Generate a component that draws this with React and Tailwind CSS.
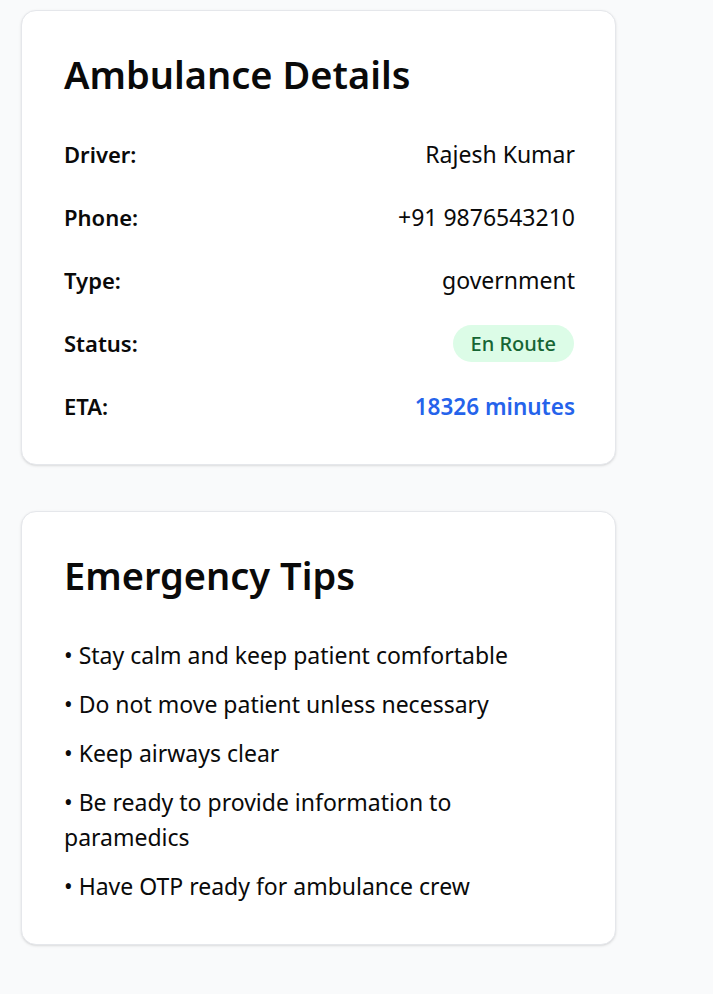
import React from 'react'

const details = [
  { label: 'Driver:', value: 'Rajesh Kumar' },
  { label: 'Phone:', value: '+91 9876543210' },
  { label: 'Type:', value: 'government' },
]

const tips = [
  'Stay calm and keep patient comfortable',
  'Do not move patient unless necessary',
  'Keep airways clear',
  'Be ready to provide information to paramedics',
  'Have OTP ready for ambulance crew',
]

const Card = ({ children }) => (
  <div className="w-[595px] bg-white border border-[#e5e7eb] rounded-[15px] shadow-sm pt-[40px] pb-[40px] pl-[42px] pr-[40px]">
    {children}
  </div>
)

const App = () => {
  return (
    <div className="min-h-screen bg-[#f9fafb] pt-[10px] pl-[21px] text-[#0a0a0a]" style={{ fontFamily: '"Noto Sans", sans-serif' }}>
      <div className="flex flex-col gap-[46px]">
        <Card>
          <h2 className="text-[38px] leading-[47px] font-semibold mb-[39px]">Ambulance Details</h2>
          <div className="flex flex-col gap-[28px]">
            {details.map((d, i) => (
              <div key={i} className="flex justify-between items-center h-[35px]">
                <span className="font-semibold text-[22px]">{d.label}</span>
                <span className="text-[23px]">{d.value}</span>
              </div>
            ))}
            <div className="flex justify-between items-center h-[35px]">
              <span className="font-semibold text-[22px]">Status:</span>
              <span className="bg-[#dcfce7] text-[#166534] rounded-full px-[18px] h-[37px] flex items-center text-[20px] font-medium mr-[1px]">En Route</span>
            </div>
            <div className="flex justify-between items-center h-[35px]">
              <span className="font-semibold text-[22px]">ETA:</span>
              <span className="font-semibold text-[22.5px] text-[#2563eb]">18326 minutes</span>
            </div>
          </div>
        </Card>
        <Card>
          <h2 className="text-[38px] leading-[47px] font-semibold mb-[39px]">Emergency Tips</h2>
          <ul className="flex flex-col gap-[14px] text-[23px] leading-[35px]">
            {tips.map((t, i) => (
              <li key={i}>• {t}</li>
            ))}
          </ul>
        </Card>
      </div>
    </div>
  )
}

export default App
